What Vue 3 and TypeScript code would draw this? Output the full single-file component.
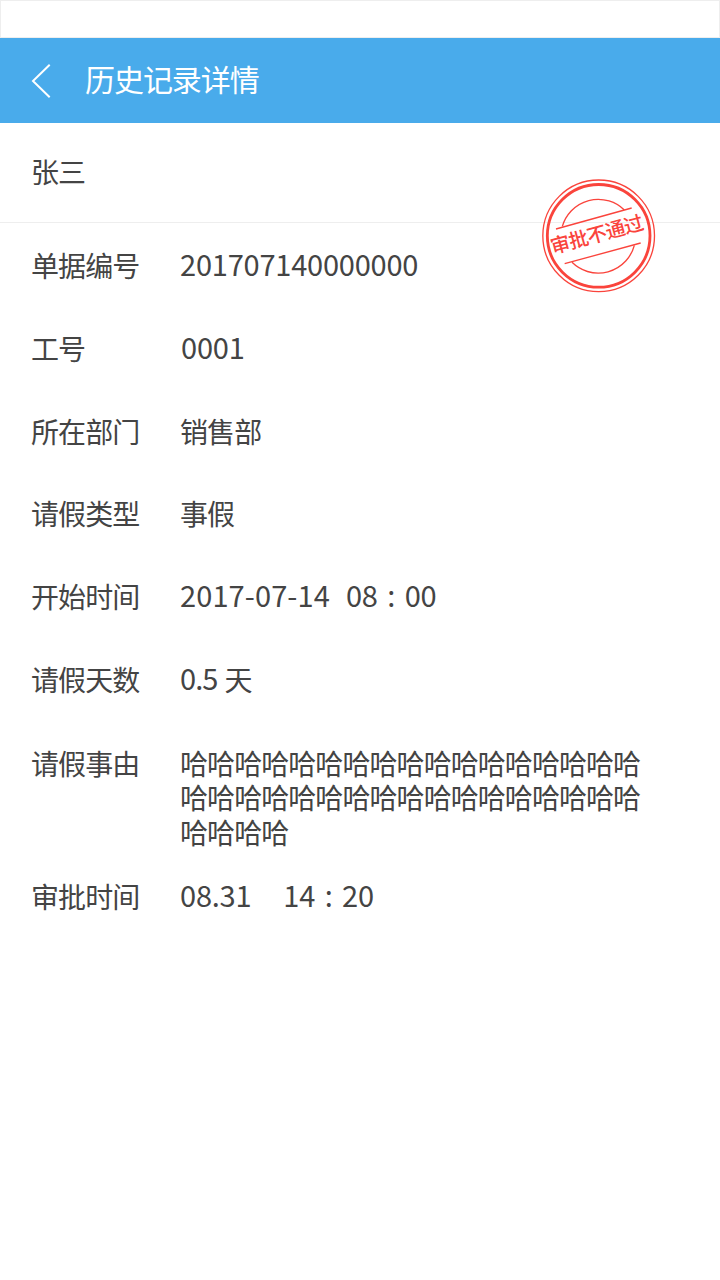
<script setup lang="ts">
interface DetailRow {
  key: string
  label: string
  value?: string
  parts?: string[]
}

const applicant = '张三'

const rows: DetailRow[] = [
  { key: 'number', label: '单据编号', value: '201707140000000' },
  { key: 'staff', label: '工号', value: '0001' },
  { key: 'dept', label: '所在部门', value: '销售部' },
  { key: 'type', label: '请假类型', value: '事假' },
  { key: 'start', label: '开始时间', parts: ['2017-07-14', '08', ':', '00'] },
  { key: 'days', label: '请假天数', parts: ['0.5', '天'] },
  { key: 'reason', label: '请假事由', value: '哈'.repeat(38) },
  { key: 'approved', label: '审批时间', parts: ['08.31', '14', ':', '20'] },
]

const isHan = (text: string): boolean => /[\u4e00-\u9fff]/.test(text)
</script>

<template>
  <div class="page">
    <div class="status-bar"></div>
    <header class="nav">
      <svg class="back" width="20" height="36" viewBox="0 0 20 36">
        <path d="M18.7 1.7 2 18 18.7 34.3" />
      </svg>
      <h1 class="title">历史记录详情</h1>
    </header>
    <section class="applicant">{{ applicant }}</section>
    <dl class="details">
      <div v-for="row in rows" :key="row.key" class="row" :class="row.key">
        <dt class="label">{{ row.label }}</dt>
        <dd class="value">
          <template v-if="row.parts">
            <span v-for="(part, i) in row.parts" :key="i" class="part" :class="{ num: !isHan(part), colon: part === ':' }">{{ part }}</span>
          </template>
          <span v-else class="part" :class="{ num: !isHan(row.value ?? '') }">{{ row.value }}</span>
        </dd>
      </div>
    </dl>
    <svg class="stamp" width="117" height="116" viewBox="30 24 351 348">
      <circle cx="206" cy="197.5" r="167.5" stroke-width="4" />
      <circle cx="206" cy="197.5" r="154" stroke-width="8.5" />
      <path d="M97 169A112 112 0 0 1 283 120M126 277A112 112 0 0 0 313 226" stroke-width="4" />
      <path d="M78 177 305 114M104 281 332 219" stroke-width="4" />
      <text class="stamp-text" transform="translate(200 194) rotate(-15.3)" x="0" y="21" text-anchor="middle">审批不通过</text>
    </svg>
  </div>
</template>

<style>
body {
  margin: 0;
  background: #fff;
}
</style>

<style scoped>
.page {
  position: relative;
  width: 720px;
  height: 1280px;
  overflow: hidden;
  background: #fff;
  color: #444;
  font-family: "Noto Sans CJK SC", sans-serif;
  font-size: 28px;
  letter-spacing: -0.93px;
}

.status-bar {
  box-sizing: border-box;
  height: 38px;
  border: 1px solid #eee;
}

.nav {
  display: flex;
  align-items: center;
  box-sizing: border-box;
  height: 85px;
  padding-left: 31px;
  background: #49abeb;
  color: #fff;
}

.back {
  fill: none;
  stroke: #fff;
  stroke-width: 2;
}

.title {
  margin: 0 0 0 34px;
  padding-bottom: 5px;
  font-size: 30px;
  font-weight: 400;
  line-height: 40px;
  letter-spacing: -1.05px;
}

.applicant {
  box-sizing: border-box;
  height: 100px;
  padding: 0 31px;
  border-bottom: 1px solid #eee;
  line-height: 97px;
}

.details {
  margin: 0;
  padding: 25px 0 0 31px;
}

.row {
  display: flex;
  height: 83px;
  line-height: 34px;
}

.row.dept {
  height: 82px;
}

.row.days {
  height: 84px;
}

.row.reason {
  height: 133px;
}

.label {
  width: 149px;
}

.value {
  display: flex;
  width: 464px;
  margin: 0;
}

.reason .value {
  line-height: 34.4px;
}

.num {
  font-size: 29px;
  line-height: 30px;
  letter-spacing: -0.22px;
}

.staff .value {
  padding-left: 1px;
}

.start .part:first-child {
  letter-spacing: 0.1px;
}

.start .part:nth-child(2) {
  margin-left: 16px;
}

.part.colon {
  width: 27px;
  text-align: center;
}

.days .part:first-child {
  letter-spacing: -0.9px;
}

.days .part:nth-child(2) {
  margin-left: 7px;
}

.approved .part:nth-child(2) {
  margin-left: 32px;
}

.stamp {
  position: absolute;
  left: 540px;
  top: 178px;
  fill: none;
  stroke: #fa443c;
}

.stamp-text {
  fill: #fa443c;
  stroke: none;
  font-size: 59px;
  font-weight: 500;
  letter-spacing: -2px;
}
</style>
